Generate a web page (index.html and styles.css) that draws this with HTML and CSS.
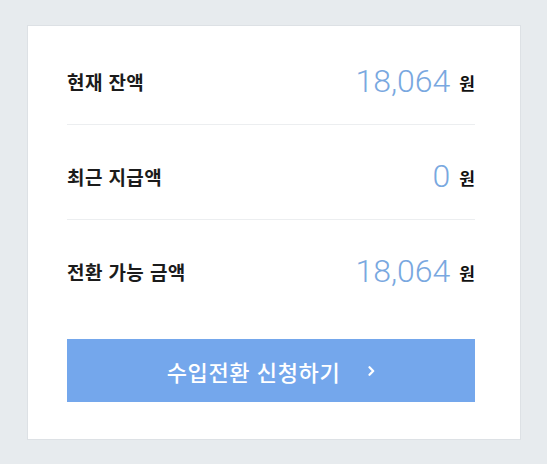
FILE: index.html
```html
<!DOCTYPE html>
<html lang="ko">
<head>
<meta charset="utf-8">
<link rel="stylesheet" href="styles.css">
</head>
<body>
<div class="page">
  <section class="card">
    <div class="row">
      <span class="label">현재 잔액</span>
      <span class="amount"><span class="num">18,064</span><span class="unit">원</span></span>
    </div>
    <div class="row">
      <span class="label">최근 지급액</span>
      <span class="amount"><span class="num">0</span><span class="unit">원</span></span>
    </div>
    <div class="row last">
      <span class="label">전환 가능 금액</span>
      <span class="amount"><span class="num">18,064</span><span class="unit">원</span></span>
    </div>
    <button class="cta" type="button">
      <span class="cta-text">수입전환 신청하기</span>
      <svg class="chev" width="7" height="10" viewBox="0 0 7 10"><path d="M1.5 1.2 L5.2 5 L1.5 8.8" fill="none" stroke="#fff" stroke-width="2.2" stroke-linecap="round" stroke-linejoin="round"/></svg>
    </button>
  </section>
</div>
</body>
</html>
```
FILE: styles.css
```css
html, body {
  margin: 0;
  padding: 0;
  background: #e7ebee;
}
body {
  font-family: "Noto Sans CJK KR", "Noto Sans", sans-serif;
  width: 547px;
  height: 464px;
}
.page {
  padding: 25px 26px 0 27px;
}
.card {
  box-sizing: border-box;
  width: 494px;
  height: 415px;
  background: #fff;
  border: 1px solid #dde1e5;
  padding: 4px 45px 0 39px;
  display: flex;
  flex-direction: column;
}
.row {
  display: flex;
  align-items: center;
  justify-content: space-between;
  height: 32px;
  padding: 35px 0 27px;
  border-bottom: 1px solid #eceef0;
}
.row.last {
  border-bottom: none;
}
.label {
  font-size: 19px;
  font-weight: 700;
  color: #1b1b1b;
  letter-spacing: 0.4px;
}
.amount {
  display: flex;
  align-items: center;
}
.num {
  font-family: Roboto, "Liberation Sans", sans-serif;
  font-weight: 300;
  font-size: 32px;
  line-height: 32px;
  color: #79a8e0;
}
.unit {
  font-size: 17px;
  font-weight: 700;
  color: #111;
  margin-left: 9px;
  position: relative;
  top: 1px;
}
.cta {
  margin-top: 25px;
  height: 63px;
  width: 100%;
  border: none;
  background: #74a7ec;
  color: #fff;
  display: flex;
  align-items: center;
  justify-content: center;
  font-family: "Noto Sans CJK KR", sans-serif;
  font-size: 22px;
  font-weight: 500;
  letter-spacing: 0.6px;
  padding: 0 0 0 0;
  cursor: pointer;
}
.cta-text {
  line-height: 24px;
}
.chev {
  margin-left: 28px;
  margin-top: 1px;
}
```
